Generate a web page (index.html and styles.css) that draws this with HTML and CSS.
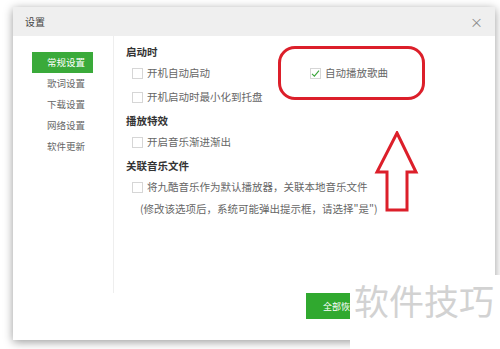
FILE: index.html
```html
<!DOCTYPE html>
<html lang="zh-CN">
<head>
    <meta charset="UTF-8">
    <meta name="viewport" content="width=device-width, initial-scale=1.0">
    <title>设置</title>
    <link rel="stylesheet" href="styles.css">
</head>
<body>
<div class="dialog">
    <div class="titlebar">
        <span class="title">设置</span>
        <span class="close">&times;</span>
    </div>
    <div class="dialog-body">
        <ul class="sidebar">
            <li class="active">常规设置</li>
            <li>歌词设置</li>
            <li>下载设置</li>
            <li>网络设置</li>
            <li>软件更新</li>
        </ul>
        <div class="content">
            <h3>启动时</h3>
            <div class="grid">
                <label class="option"><span class="box"></span>开机自动启动</label>
                <label class="option"><span class="box checked">
                    <svg width="9" height="9" viewBox="0 0 9 9"><path d="M1 4.8 L3.4 7.2 L8 1.6" fill="none" stroke="#3aa53a" stroke-width="1.1"/></svg>
                </span>自动播放歌曲</label>
                <label class="option"><span class="box"></span>开机启动时最小化到托盘</label>
            </div>
            <h3>播放特效</h3>
            <label class="option"><span class="box"></span>开启音乐渐进渐出</label>
            <h3>关联音乐文件</h3>
            <label class="option"><span class="box"></span>将九酷音乐作为默认播放器，关联本地音乐文件</label>
            <p class="note">(修改该选项后，系统可能弹出提示框，请选择"是")</p>
        </div>
    </div>
    <div class="footer">
        <button class="btn-reset">全部恢</button>
    </div>
</div>

<div class="mark-box"></div>
<svg class="mark-arrow" width="60" height="90" viewBox="0 0 60 90">
    <polygon points="30,2 49,41 40,41 40,79 20,79 20,41 10,41" fill="none" stroke="#dc1f2a" stroke-width="3" stroke-linejoin="miter"/>
</svg>
<div class="watermark">软件技巧</div>
</body>
</html>
```

FILE: styles.css
```css
body {
    margin: 0;
    padding: 0;
    width: 500px;
    height: 349px;
    overflow: hidden;
    position: relative;
    background-color: #fff;
    font-family: "Noto Sans CJK SC", "Microsoft YaHei", sans-serif;
}

.dialog {
    margin: 7px 0 0 13px;
    width: 482px;
    height: 333px;
    background-color: #fff;
    box-shadow: 0 2px 9px rgba(0, 0, 0, 0.4);
}

.titlebar {
    height: 29px;
    background-color: #efefef;
    display: flex;
    align-items: center;
    justify-content: space-between;
    padding: 0 12px 0 12px;
}

.title {
    font-size: 10px;
    color: #444;
}

.close {
    font-size: 13px;
    color: #8a8a8a;
    line-height: 1;
}

.dialog-body {
    display: flex;
    height: 257px;
}

.sidebar {
    list-style: none;
    margin: 0;
    padding: 16px 0 0 19px;
    width: 81px;
    border-right: 1px solid #eee;
}

.sidebar li {
    width: 61px;
    height: 21px;
    line-height: 21px;
    text-align: right;
    padding-right: 8px;
    box-sizing: border-box;
    font-size: 9.5px;
    color: #666;
}

.sidebar li.active {
    background-color: #3aaa3a;
    color: #fff;
}

.content {
    flex: 1;
    padding: 8px 0 0 12px;
    font-size: 10.5px;
    color: #666;
}

h3 {
    margin: 8px 0 5px 0;
    font-size: 10.5px;
    line-height: 16px;
    color: #333;
    font-weight: bold;
}

h3:first-child {
    margin-top: 0;
}

.grid {
    display: grid;
    grid-template-columns: 178px auto;
    row-gap: 8px;
}

.option {
    display: flex;
    align-items: center;
    height: 16px;
    line-height: 16px;
    padding-left: 6px;
}

.box {
    width: 11px;
    height: 11px;
    border: 1px solid #d6d6d6;
    box-sizing: border-box;
    margin-right: 4px;
    display: flex;
    align-items: center;
    justify-content: center;
}

.note {
    margin: 6px 0 0 14px;
    line-height: 16px;
    color: #666;
}

.footer {
    display: flex;
    padding-left: 293px;
}

.btn-reset {
    width: 44px;
    height: 26px;
    border: none;
    background-color: #30a92f;
    color: #fff;
    font-family: inherit;
    font-size: 9px;
    padding: 0 0 0 17px;
    text-align: left;
    white-space: nowrap;
}

.mark-box {
    position: absolute;
    left: 278px;
    top: 46px;
    width: 147px;
    height: 54px;
    box-sizing: border-box;
    border: 3px solid #dc1f2a;
    border-radius: 17px;
}

.mark-arrow {
    position: absolute;
    left: 367px;
    top: 131px;
}

.watermark {
    position: absolute;
    left: 350px;
    top: 275px;
    width: 150px;
    height: 74px;
    background-color: #fff;
    color: #d2d2d2;
    font-size: 35px;
    line-height: 50px;
    padding-left: 4px;
    box-sizing: border-box;
    white-space: nowrap;
}
```
